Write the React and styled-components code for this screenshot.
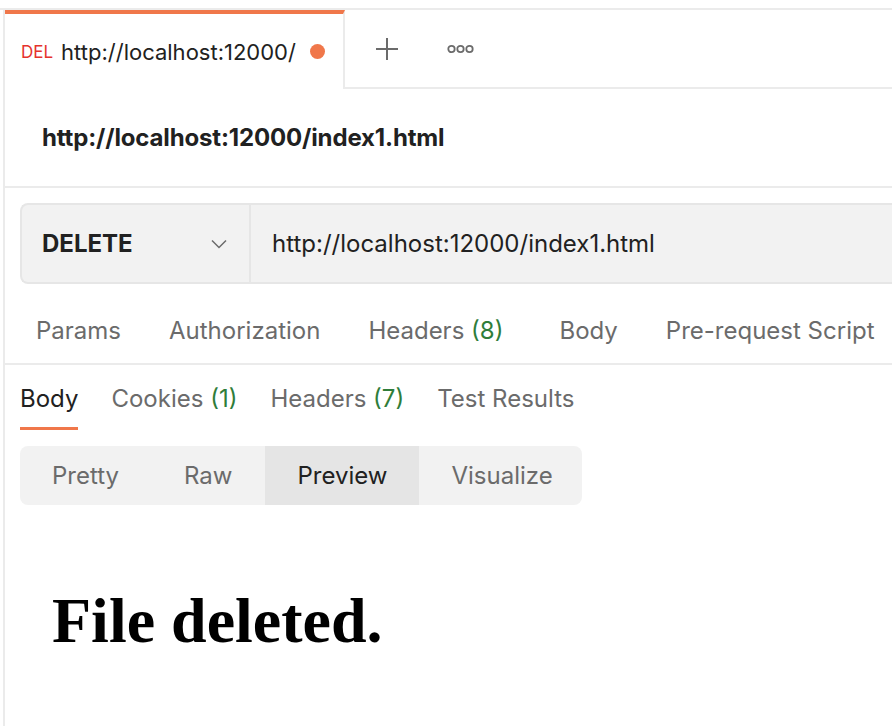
import React from "react";
import styled, { createGlobalStyle } from "styled-components";

const GlobalStyle = createGlobalStyle`
  html, body {
    margin: 0;
    background: #ffffff;
  }
  body {
    font-family: Inter, "Noto Sans", "Liberation Sans", sans-serif;
    color: #212121;
    overflow: hidden;
  }
`;

const Page = styled.div`
  margin-top: 8px;
  border-top: 2px solid #ebebeb;
  height: 716px;
`;

const Frame = styled.div`
  margin-left: 3px;
  border-left: 2px solid #ebebeb;
  height: 100%;
  display: flex;
  flex-direction: column;
`;

const TabBar = styled.div`
  display: flex;
  height: 79px;
`;

const OpenTab = styled.div`
  width: 340px;
  display: flex;
  align-items: center;
  padding-left: 16px;
  box-sizing: border-box;
  border-top: 4px solid #f0774a;
  border-right: 2px solid #ebebeb;
  gap: 8px;
`;

const Method = styled.span`
  font-size: 17px;
  color: #e5322d;
`;

const TabTitle = styled.span`
  font-size: 22px;
  color: #212121;
`;

const Unsaved = styled.span`
  width: 15px;
  height: 15px;
  border-radius: 50%;
  background: #f0774a;
  margin-left: 6px;
`;

const TabTools = styled.div`
  flex: 1;
  display: flex;
  align-items: center;
  border-bottom: 2px solid #ebebeb;
  padding-left: 30px;
  gap: 48px;
`;

const ToolButton = styled.span`
  display: flex;
  align-items: center;
  color: #6b6b6b;
`;

const RequestHeader = styled.div`
  height: 97px;
  display: flex;
  align-items: center;
  padding-left: 37px;
  border-bottom: 2px solid #ebebeb;
  font-size: 24px;
  font-weight: 700;
  letter-spacing: -0.15px;
  color: #212121;
`;

const UrlBox = styled.div`
  margin: 15px 0 0 15px;
  height: 81px;
  box-sizing: border-box;
  display: flex;
  background: #f2f2f2;
  border: 2px solid #e6e6e6;
  border-right: none;
  border-radius: 8px 0 0 8px;
`;

const MethodSelect = styled.div`
  width: 229px;
  box-sizing: border-box;
  padding: 0 22px 0 20px;
  display: flex;
  align-items: center;
  justify-content: space-between;
  border-right: 2px solid #e6e6e6;
  font-size: 24px;
  font-weight: 700;
  color: #212121;
`;

const UrlText = styled.div`
  display: flex;
  align-items: center;
  padding-left: 21px;
  font-size: 24px;
  color: #212121;
`;

const TabRow = styled.div`
  display: flex;
  align-items: center;
  gap: ${(p) => p.gap}px;
  padding: ${(p) => p.lower || 0}px 0 0 ${(p) => p.inset}px;
  height: ${(p) => p.height}px;
  box-sizing: border-box;
  border-bottom: ${(p) => (p.ruled ? "2px solid #ebebeb" : "none")};
`;

const Tab = styled.span`
  position: relative;
  font-size: 24px;
  color: ${(p) => (p.active ? "#212121" : "#6b6b6b")};
  margin-right: ${(p) => p.extra || 0}px;

  &::after {
    content: "";
    display: ${(p) => (p.active ? "block" : "none")};
    position: absolute;
    left: 0;
    right: 0;
    top: 43px;
    height: 3px;
    background: #f0774a;
  }
`;

const Count = styled.span`
  color: #2f7d3a;
`;

const Segmented = styled.div`
  margin: 15px 0 0 15px;
  width: 562px;
  height: 59px;
  display: flex;
  background: #f2f2f2;
  border-radius: 8px;
  overflow: hidden;
`;

const Segment = styled.div`
  flex: 0 0 auto;
  display: flex;
  align-items: center;
  padding: 0 ${(p) => p.pad || 32}px;
  font-size: 24px;
  background: ${(p) => (p.active ? "#e5e5e5" : "transparent")};
  color: ${(p) => (p.active ? "#212121" : "#6b6b6b")};
`;

const Preview = styled.div`
  padding: 84px 0 0 47px;
`;

const Heading = styled.h1`
  margin: 0;
  font-family: "Liberation Serif", "Times New Roman", serif;
  font-size: 64px;
  font-weight: 700;
  color: #000000;
  line-height: 1;
`;

function PlusIcon() {
  return (
    <svg width="24" height="24" viewBox="0 0 24 24">
      <path d="M12 1v22M1 12h22" stroke="currentColor" strokeWidth="2" />
    </svg>
  );
}

function MoreIcon() {
  return (
    <svg width="27" height="10" viewBox="0 0 27 10">
      <circle cx="4.5" cy="5" r="3.2" fill="none" stroke="currentColor" strokeWidth="1.8" />
      <circle cx="13.5" cy="5" r="3.2" fill="none" stroke="currentColor" strokeWidth="1.8" />
      <circle cx="22.5" cy="5" r="3.2" fill="none" stroke="currentColor" strokeWidth="1.8" />
    </svg>
  );
}

function Chevron() {
  return (
    <svg width="16" height="10" viewBox="0 0 16 10">
      <path d="M1 1.5l7 7 7-7" fill="none" stroke="#6b6b6b" strokeWidth="1.5" />
    </svg>
  );
}

export default function App() {
  return (
    <>
      <GlobalStyle />
      <Page>
        <Frame>
          <TabBar>
            <OpenTab>
              <Method>DEL</Method>
              <TabTitle>http://localhost:12000/</TabTitle>
              <Unsaved />
            </OpenTab>
            <TabTools>
              <ToolButton>
                <PlusIcon />
              </ToolButton>
              <ToolButton>
                <MoreIcon />
              </ToolButton>
            </TabTools>
          </TabBar>

          <RequestHeader>http://localhost:12000/index1.html</RequestHeader>

          <UrlBox>
            <MethodSelect>
              DELETE
              <Chevron />
            </MethodSelect>
            <UrlText>http://localhost:12000/index1.html</UrlText>
          </UrlBox>

          <TabRow gap={48} inset={31} height={81} lower={14} ruled>
            <Tab>Params</Tab>
            <Tab>Authorization</Tab>
            <Tab extra={8}>
              Headers <Count>(8)</Count>
            </Tab>
            <Tab>Body</Tab>
            <Tab>Pre-request Script</Tab>
          </TabRow>

          <TabRow gap={33} inset={15} height={66}>
            <Tab active>Body</Tab>
            <Tab>
              Cookies <Count>(1)</Count>
            </Tab>
            <Tab>
              Headers <Count>(7)</Count>
            </Tab>
            <Tab>Test Results</Tab>
          </TabRow>

          <Segmented>
            <Segment>Pretty</Segment>
            <Segment pad={33}>Raw</Segment>
            <Segment active>Preview</Segment>
            <Segment>Visualize</Segment>
          </Segmented>

          <Preview>
            <Heading>File deleted.</Heading>
          </Preview>
        </Frame>
      </Page>
    </>
  );
}
